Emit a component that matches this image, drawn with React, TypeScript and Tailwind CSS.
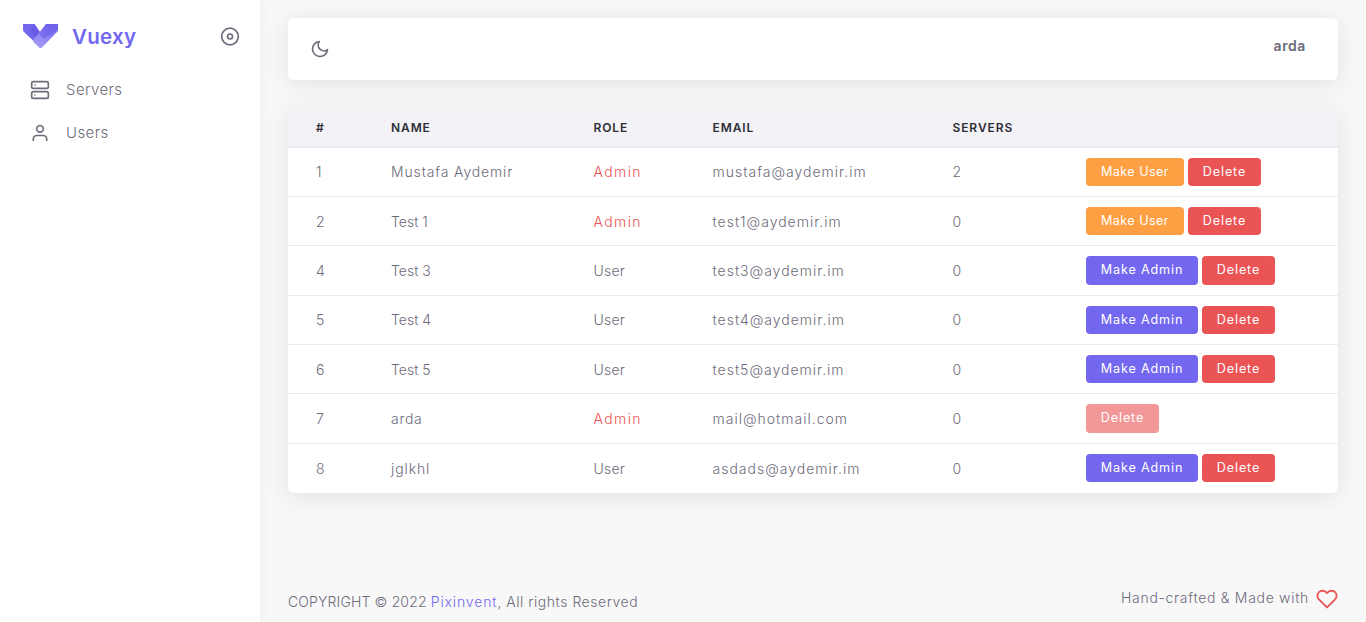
import React from "react";

const font = "font-['Inter','Liberation_Sans',sans-serif]";

type Row = { id: number; name: string; nameCls: string; role: string; email: string; servers: number; kind: "user" | "admin" | "self" };
const rows: Row[] = [
  { id: 1, name: "Mustafa Aydemir", nameCls: "tracking-[0.85px]", role: "Admin", email: "mustafa@aydemir.im", servers: 2, kind: "user" },
  { id: 2, name: "Test 1", nameCls: "tracking-[0px]", role: "Admin", email: "test1@aydemir.im", servers: 0, kind: "user" },
  { id: 4, name: "Test 3", nameCls: "tracking-[0px]", role: "User", email: "test3@aydemir.im", servers: 0, kind: "admin" },
  { id: 5, name: "Test 4", nameCls: "tracking-[0px]", role: "User", email: "test4@aydemir.im", servers: 0, kind: "admin" },
  { id: 6, name: "Test 5", nameCls: "tracking-[0px]", role: "User", email: "test5@aydemir.im", servers: 0, kind: "admin" },
  { id: 7, name: "arda", nameCls: "tracking-[0.7px]", role: "Admin", email: "mail@hotmail.com", servers: 0, kind: "self" },
  { id: 8, name: "jglkhl", nameCls: "tracking-[0.9px]", role: "User", email: "asdads@aydemir.im", servers: 0, kind: "admin" },
];

function Feather({ className, children }: { className: string; children: React.ReactNode }) {
  return (
    <svg viewBox="0 0 24 24" fill="none" stroke="currentColor" strokeWidth="2" strokeLinecap="round" strokeLinejoin="round" className={className}>
      {children}
    </svg>
  );
}

function Logo() {
  return (
    <svg viewBox="0 0 35 24" className="w-[35px] h-[24px] shrink-0">
      <defs>
        <linearGradient id="lg1" x1="0.9" y1="0.1" x2="0.3" y2="1">
          <stop offset="0" stopColor="#7367f0" />
          <stop offset="1" stopColor="#a59df6" />
        </linearGradient>
      </defs>
      <path d="M0 0H11.5L19 11 15 21 2 9Q0 7.5 0 6Z" fill="#7367f0" />
      <path d="M7 7.5L11.5 0 19 11 14.5 16Z" fill="#5e52d8" opacity="0.45" />
      <path d="M23 0H35V6Q35 7.5 33 9L19 23.5Q17.5 24.5 16 23.5L9.5 17Z" fill="url(#lg1)" />
      <path d="M23 0H35V5L21 15 16 10Z" fill="#6a5eea" opacity="0.55" />
    </svg>
  );
}

function Btn({ kind, label }: { kind: "orange" | "purple" | "red" | "faded"; label: string }) {
  const cls = {
    orange: "bg-[#ff9f43] w-[98px] tracking-[0.45px]",
    purple: "bg-[#7367f0] w-[112px] tracking-[0.85px]",
    red: "bg-[#ea5455] w-[73px] tracking-[0.85px]",
    faded: "bg-[#f29899] w-[73px] tracking-[0.85px]",
  }[kind];
  return (
    <button className={`${cls} h-[28.4px] rounded-[4px] text-white text-[12.6px] font-normal leading-none whitespace-nowrap text-center`}>
      {label}
    </button>
  );
}

export default function App() {
  return (
    <div className={`${font} flex min-h-screen bg-[#f8f8f8] text-[#6e6b7b] text-[14px] font-light tracking-[0.7px]`}>
      <aside className="w-[260px] shrink-0 bg-white shadow-[0_0_15px_0_rgba(34,41,47,0.05)]">
        <div className="flex items-center pl-[23px] pr-[20px] h-[72px]">
          <Logo />
          <span className="ml-[14px] text-[#7367f0] text-[20.5px] font-semibold tracking-[0.3px] translate-y-[0.5px]">Vuexy</span>
          <Feather className="ml-auto w-[20px] h-[20px] translate-y-[0.5px]">
            <circle cx="12" cy="12" r="10" />
            <circle cx="12" cy="12" r="3" />
          </Feather>
        </div>
        <nav className="flex flex-col gap-[3px] pl-[30px] text-[15px] tracking-[0.4px] -mt-[2px]">
          <a className="flex items-center gap-[16px] h-[40px]">
            <Feather className="w-[20px] h-[20px]">
              <rect x="2" y="2" width="20" height="8" rx="2" ry="2" />
              <rect x="2" y="14" width="20" height="8" rx="2" ry="2" />
              <line x1="6" y1="6" x2="6.01" y2="6" />
              <line x1="6" y1="18" x2="6.01" y2="18" />
            </Feather>
            Servers
          </a>
          <a className="flex items-center gap-[16px] h-[40px]">
            <Feather className="w-[20px] h-[20px]">
              <path d="M20 21v-2a4 4 0 0 0-4-4H8a4 4 0 0 0-4 4v2" />
              <circle cx="12" cy="7" r="4" />
            </Feather>
            Users
          </a>
        </nav>
      </aside>

      <main className="flex-1 min-w-0 flex flex-col px-[28px] pt-[18px]">
        <header className="h-[62px] bg-white rounded-[6px] shadow-[0_4px_24px_0_rgba(34,41,47,0.1)] flex justify-between pl-[21.5px] pr-[32px]">
          <Feather className="w-[20px] h-[20px] mt-[21px]">
            <path d="M21 12.79A9 9 0 1 1 11.21 3 7 7 0 0 0 21 12.79z" />
          </Feather>
          <span className="mt-[19px] font-semibold leading-[18px] tracking-[0.6px]">arda</span>
        </header>

        <div className="mt-[29px] bg-white rounded-[6px] shadow-[0_4px_24px_0_rgba(34,41,47,0.1)] overflow-hidden">
          <table className="w-full table-fixed border-collapse">
            <colgroup>
              <col className="w-[75px]" />
              <col className="w-[202.5px]" />
              <col className="w-[119px]" />
              <col className="w-[240px]" />
              <col className="w-[133.5px]" />
              <col />
            </colgroup>
            <thead>
              <tr className="h-[38px] bg-[#f3f2f7] border-b-2 border-[#ebe9f1] text-left text-[12px] text-[#2f2d36] tracking-[0.9px]">
                <th className="pl-[28px] font-semibold">#</th>
                <th className="pl-[28px] font-semibold">NAME</th>
                <th className="pl-[28px] font-semibold">ROLE</th>
                <th className="pl-[28px] font-semibold">EMAIL</th>
                <th className="pl-[28px] font-semibold">SERVERS</th>
                <th />
              </tr>
            </thead>
            <tbody>
              {rows.map((r, i) => (
                <tr key={r.id} className={`h-[49.4px] ${i < rows.length - 1 ? "border-b border-[#ebe9f1]" : ""}`}>
                  <td className="pl-[28px]">{r.id}</td>
                  <td className={`pl-[28px] whitespace-nowrap ${r.nameCls}`}>{r.name}</td>
                  <td className={`pl-[28px] ${r.role === "Admin" ? "text-[#ea5455] tracking-[1.4px]" : "tracking-[0.2px]"}`}>{r.role}</td>
                  <td className="pl-[28px] whitespace-nowrap tracking-[1px]">{r.email}</td>
                  <td className="pl-[28px]">{r.servers}</td>
                  <td className="pl-[28px]">
                    <div className="flex gap-[4px]">
                      {r.kind === "user" && <Btn kind="orange" label="Make User" />}
                      {r.kind === "admin" && <Btn kind="purple" label="Make Admin" />}
                      <Btn kind={r.kind === "self" ? "faded" : "red"} label="Delete" />
                    </div>
                  </td>
                </tr>
              ))}
            </tbody>
          </table>
        </div>

        <footer className="mt-auto h-[33px] flex justify-between">
          <p className="mt-[2px] leading-[21px] tracking-[0.15px]">
            COPYRIGHT © 2022 <span className="text-[#7367f0] tracking-[0.87px]">Pixinvent</span><span className="tracking-[0.53px]">, All rights Reserved</span>
          </p>
          <p className="flex items-start gap-[7px] leading-[21px] -mt-[2px] tracking-[0.7px]">
            Hand-crafted &amp; Made with
            <Feather className="w-[22px] h-[22px] text-[#ea5455] mt-[1px]">
              <path d="M20.84 4.61a5.5 5.5 0 0 0-7.78 0L12 5.67l-1.06-1.06a5.5 5.5 0 0 0-7.78 7.78l1.06 1.06L12 21.23l7.78-7.78 1.06-1.06a5.5 5.5 0 0 0 0-7.78z" />
            </Feather>
          </p>
        </footer>
      </main>
    </div>
  );
}
